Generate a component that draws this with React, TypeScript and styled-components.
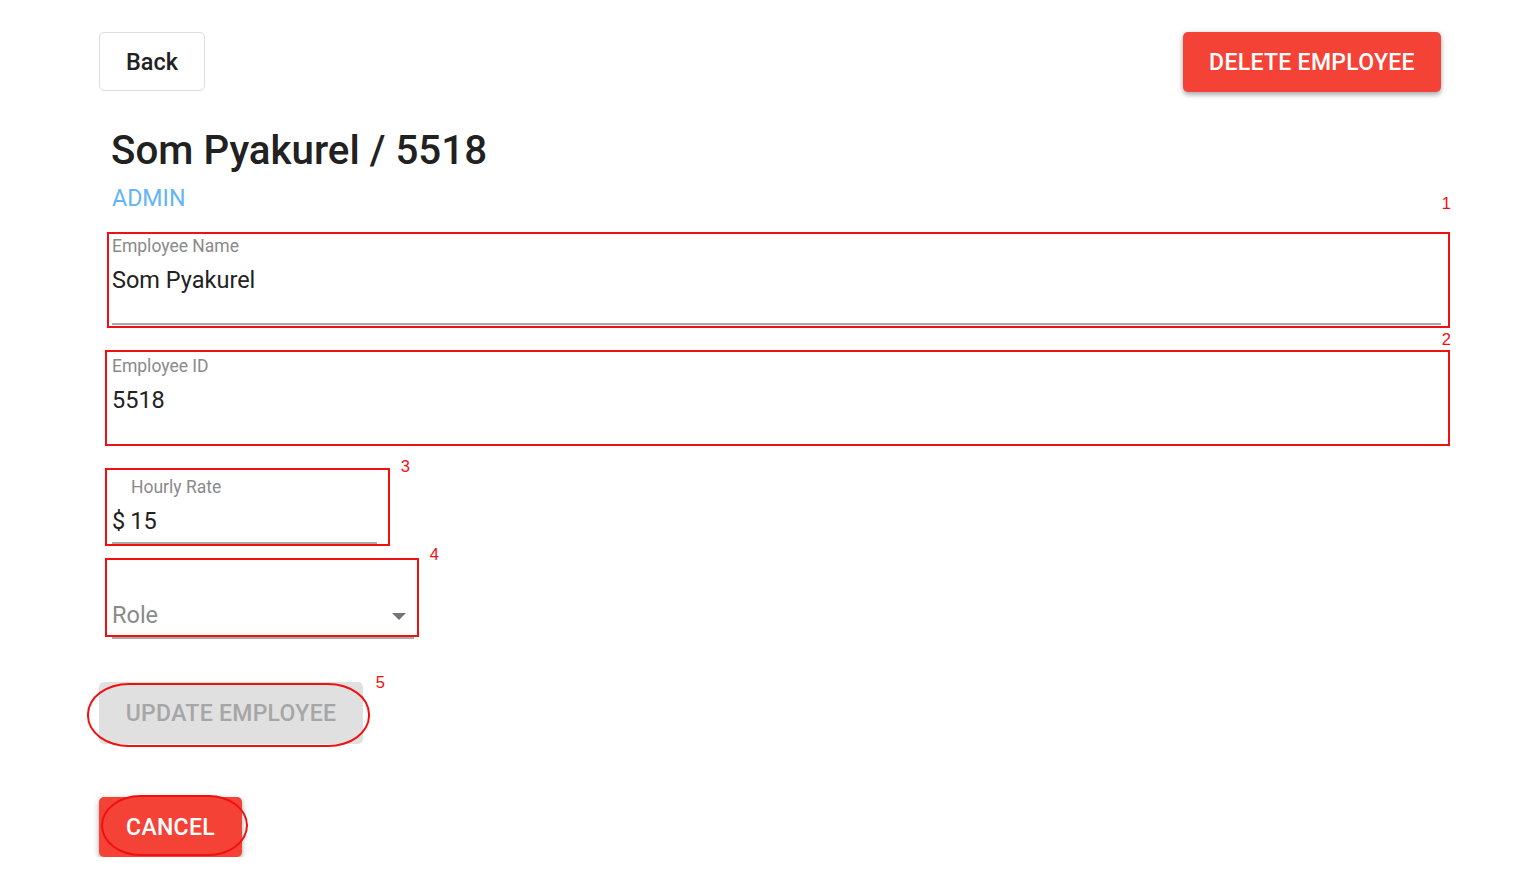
import styled, { createGlobalStyle } from 'styled-components';

const GlobalStyle = createGlobalStyle`
  body {
    margin: 0;
    background: #ffffff;
    font-family: Roboto, "Liberation Sans", Arial, sans-serif;
    color: #222222;
  }
`;

const Page = styled.div`
  padding: 32px 0 0 99px;
  width: 1342px;
  display: flex;
  flex-direction: column;
`;

const Header = styled.div`
  display: flex;
  justify-content: space-between;
  align-items: flex-start;
`;

const BackButton = styled.button`
  width: 106px;
  height: 59px;
  border: 1px solid #dcdcdc;
  border-radius: 5px;
  background: #ffffff;
  font-family: Roboto, sans-serif;
  font-size: 23.5px;
  font-weight: 500;
  color: #222222;
  cursor: pointer;
`;

const RedButton = styled.button<{ $width: number }>`
  width: ${(p) => p.$width}px;
  height: 60px;
  border: none;
  border-radius: 5px;
  background: #f44336;
  color: #ffffff;
  font-family: Roboto, sans-serif;
  font-size: 23px;
  font-weight: 500;
  letter-spacing: 0.3px;
  text-transform: uppercase;
  box-shadow: 0 3px 4px rgba(0, 0, 0, 0.25), 0 1px 8px rgba(0, 0, 0, 0.12);
  cursor: pointer;
`;

const GreyButton = styled.button`
  width: 264px;
  height: 62px;
  border: none;
  border-radius: 5px;
  background: #e0e0e0;
  color: #a6a6a6;
  font-family: Roboto, sans-serif;
  font-size: 23px;
  font-weight: 500;
  letter-spacing: 0.3px;
  text-transform: uppercase;
`;

const Content = styled.div`
  padding-left: 13px;
  display: flex;
  flex-direction: column;
`;

const Title = styled.h1`
  margin: 35px 0 0 -1px;
  font-size: 40.3px;
  line-height: 48px;
  font-weight: 500;
  color: #212121;
`;

const RoleTag = styled.div`
  margin-top: 10px;
  font-size: 23.2px;
  line-height: 26px;
  color: #64b5f6;
`;

const Field = styled.div<{ $width: number; $top: number; $bottom: number; $noLine?: boolean }>`
  position: relative;
  width: ${(p) => p.$width}px;
  margin-top: ${(p) => p.$top}px;
  padding-bottom: ${(p) => p.$bottom}px;
  border-bottom: 2px solid ${(p) => (p.$noLine ? 'transparent' : '#a9a9a9')};
`;

const Label = styled.div<{ $indent?: number }>`
  font-size: 17.5px;
  line-height: 20px;
  color: #8a8a8a;
  padding-left: ${(p) => p.$indent ?? 0}px;
`;

const Value = styled.div<{ $muted?: boolean; $gap: number }>`
  margin-top: ${(p) => p.$gap}px;
  font-size: 23.5px;
  line-height: 26px;
  color: ${(p) => (p.$muted ? '#8a8a8a' : '#222222')};
  display: flex;
  align-items: center;
  justify-content: space-between;
`;

const Amount = styled.span`
  display: flex;
  align-items: center;
`;

const Dollar = styled.span`
  margin-right: 5px;
`;

const Caret = styled.span`
  width: 0;
  height: 0;
  margin-right: 8px;
  margin-top: 2px;
  border-left: 7px solid transparent;
  border-right: 7px solid transparent;
  border-top: 7px solid #757575;
`;

const Actions = styled.div`
  display: flex;
  flex-direction: column;
  align-items: flex-start;
`;

const ButtonSlot = styled.div<{ $top: number }>`
  position: relative;
  margin-top: ${(p) => p.$top}px;
`;

/* red annotation overlays drawn on top of the form */
const Mark = styled.div<{ $t: number; $l: number; $r: number; $b: number; $radius?: string }>`
  position: absolute;
  top: ${(p) => p.$t}px;
  left: ${(p) => p.$l}px;
  right: ${(p) => p.$r}px;
  bottom: ${(p) => p.$b}px;
  border: 2px solid #f01010;
  border-radius: ${(p) => p.$radius ?? '0'};
  pointer-events: none;
`;

const MarkNumber = styled.span<{ $t: number; $r: number }>`
  position: absolute;
  top: ${(p) => p.$t}px;
  right: ${(p) => p.$r}px;
  font-family: "Liberation Sans", Arial, sans-serif;
  font-size: 16.5px;
  line-height: 18px;
  color: #f01010;
`;

const App = () => {
  return (
    <>
      <GlobalStyle />
      <Page>
        <Header>
          <BackButton>Back</BackButton>
          <RedButton $width={258}>Delete Employee</RedButton>
        </Header>
        <Content>
          <Title>Som Pyakurel / 5518</Title>
          <RoleTag>ADMIN</RoleTag>

          <Field $width={1329} $top={25} $bottom={30}>
            <Label>Employee Name</Label>
            <Value $gap={11}>Som Pyakurel</Value>
            <Mark $t={-4.5} $l={-5} $r={-9} $b={-4.5}>
              <MarkNumber $t={-40} $r={-3}>1</MarkNumber>
            </Mark>
          </Field>

          <Field $width={1329} $top={31} $bottom={29} $noLine>
            <Label>Employee ID</Label>
            <Value $gap={11}>5518</Value>
            <Mark $t={-6.5} $l={-7} $r={-9} $b={-3.5}>
              <MarkNumber $t={-22} $r={-3}>2</MarkNumber>
            </Mark>
          </Field>

          <Field $width={265} $top={33} $bottom={8}>
            <Label $indent={19}>Hourly Rate</Label>
            <Value $gap={11}>
              <Amount>
                <Dollar>$</Dollar>15
              </Amount>
            </Value>
            <Mark $t={-9.5} $l={-7} $r={-13} $b={-3.5}>
              <MarkNumber $t={-13} $r={-22}>3</MarkNumber>
            </Mark>
          </Field>

          <Field $width={302} $top={12} $bottom={9}>
            <Label>&nbsp;</Label>
            <Value $gap={26} $muted>
              Role
              <Caret />
            </Value>
            <Mark $t={1.5} $l={-7} $r={-5} $b={0.5}>
              <MarkNumber $t={-15} $r={-22}>4</MarkNumber>
            </Mark>
          </Field>
        </Content>

        <Actions>
          <ButtonSlot $top={43}>
            <GreyButton disabled>Update Employee</GreyButton>
            <Mark $t={1} $l={-12} $r={-7} $b={-3} $radius="42px / 31px">
              <MarkNumber $t={-12} $r={-17}>5</MarkNumber>
            </Mark>
          </ButtonSlot>
          <ButtonSlot $top={53}>
            <RedButton $width={143}>Cancel</RedButton>
            <Mark $t={-2} $l={2} $r={-6} $b={1} $radius="40px / 31px" />
          </ButtonSlot>
        </Actions>
      </Page>
    </>
  );
};

export default App;
